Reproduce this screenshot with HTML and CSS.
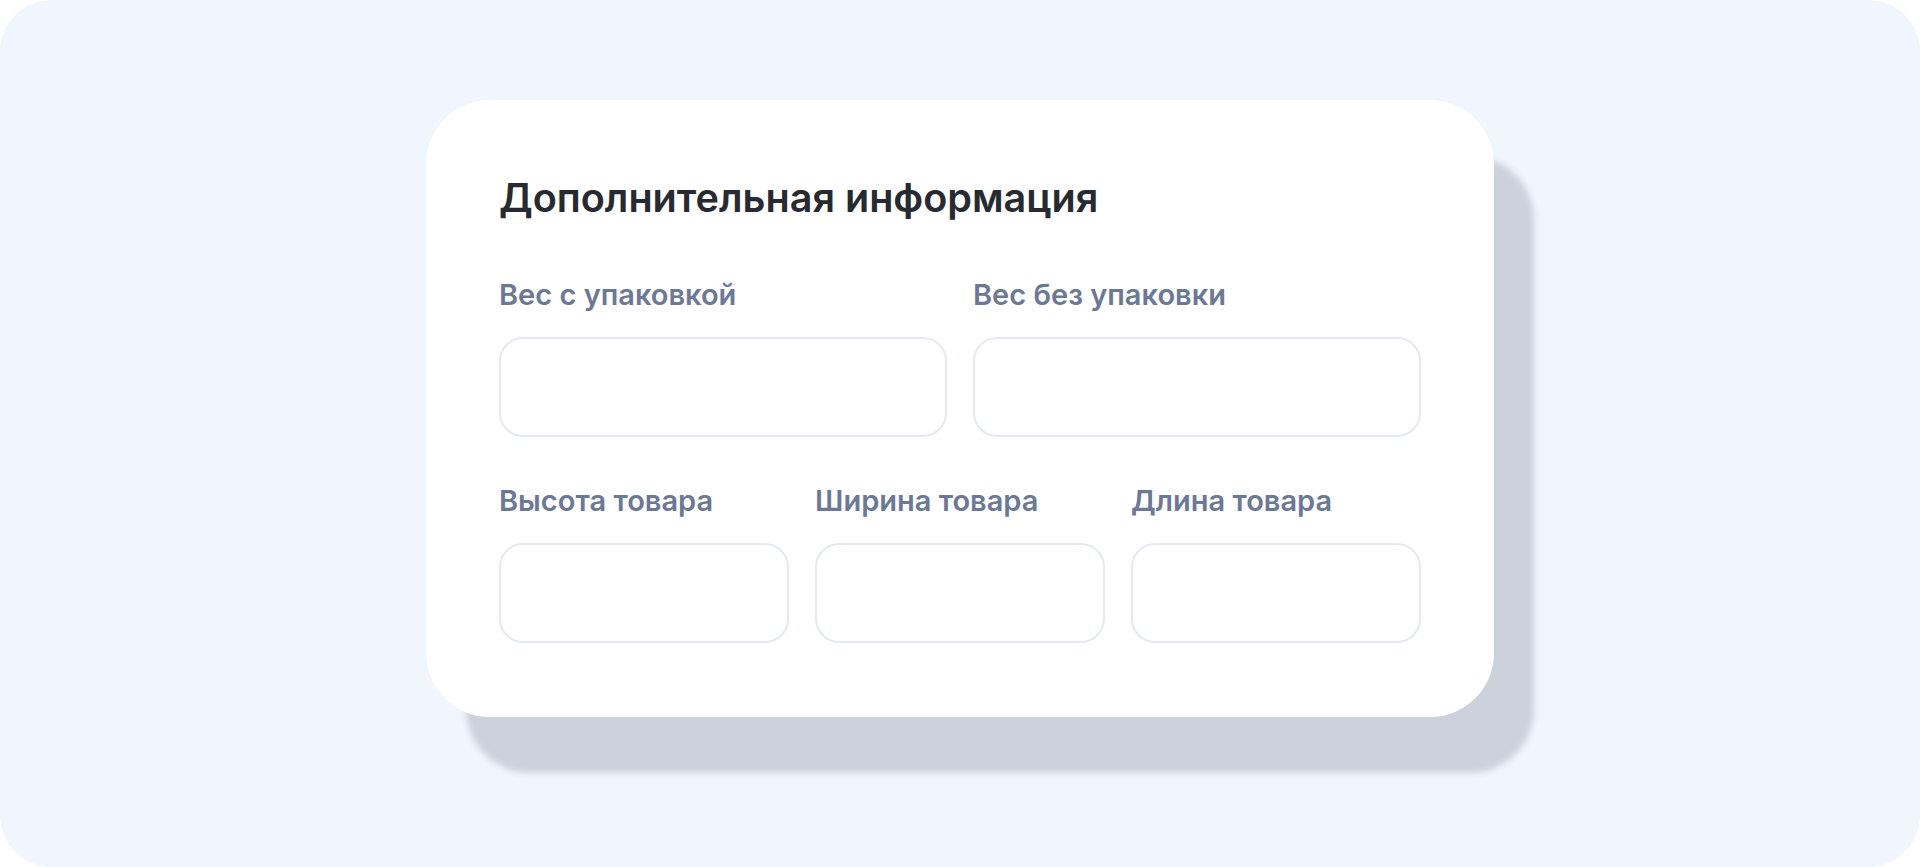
FILE: index.html
```html
<!DOCTYPE html>
<html lang="ru">
<head>
  <meta charset="UTF-8" />
  <meta name="viewport" content="width=device-width, initial-scale=1.0"/>
  <title>Дополнительная информация</title>
  <link rel="stylesheet" href="styles.css">
</head>
<body>
  <div class="frame">
    <form class="card">
      <h2 class="card-title">Дополнительная информация</h2>

      <div class="row row-two">
        <div class="field">
          <label for="weightPacked">Вес с упаковкой</label>
          <input type="text" id="weightPacked" />
        </div>
        <div class="field">
          <label for="weightNet">Вес без упаковки</label>
          <input type="text" id="weightNet" />
        </div>
      </div>

      <div class="row row-three">
        <div class="field">
          <label for="height">Высота товара</label>
          <input type="text" id="height" />
        </div>
        <div class="field">
          <label for="width">Ширина товара</label>
          <input type="text" id="width" />
        </div>
        <div class="field">
          <label for="length">Длина товара</label>
          <input type="text" id="length" />
        </div>
      </div>
    </form>
  </div>
</body>
</html>
```

FILE: styles.css
```css
html, body {
  margin: 0;
  background-color: #ffffff;
}
body {
  font-family: Inter, "Noto Sans", sans-serif;
}
.frame {
  width: 1920px;
  height: 867px;
  box-sizing: border-box;
  padding-top: 100px;
  background-color: #f0f5fe;
  border-radius: 52px;
  display: flex;
  justify-content: center;
  align-items: flex-start;
  overflow: hidden;
}
.card {
  width: 922px;
  padding: 74px 73px;
  background-color: #ffffff;
  border-radius: 64px;
  box-shadow: 40px 56px 6px #cdd1dc;
}
.card-title {
  margin: 0 0 55px;
  font-size: 39.6px;
  line-height: 48px;
  font-weight: 600;
  color: #272a30;
}
.row {
  display: grid;
  gap: 26px;
}
.row-two {
  grid-template-columns: 1fr 1fr;
  margin-bottom: 46px;
}
.row-three {
  grid-template-columns: 1fr 1fr 1fr;
}
.field label {
  display: block;
  margin-bottom: 25px;
  font-size: 29px;
  line-height: 35px;
  font-weight: 600;
  color: #6b7896;
}
.field input {
  display: block;
  width: 100%;
  height: 100px;
  box-sizing: border-box;
  border: 2px solid #e6e9f3;
  border-radius: 24px;
  background-color: #ffffff;
  outline: none;
}
```
